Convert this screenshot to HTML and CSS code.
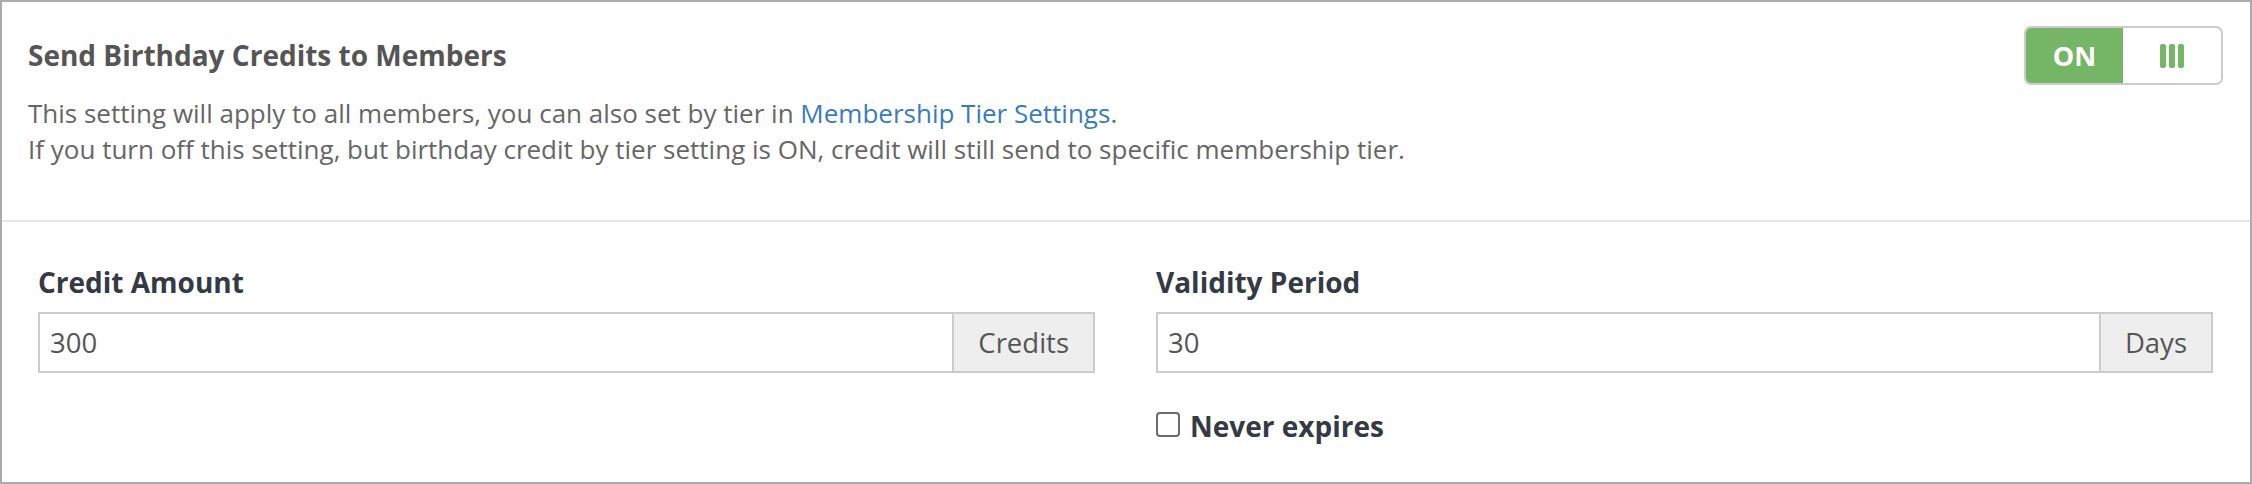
FILE: index.html
```html
<!DOCTYPE html>
<html lang="en">
<head>
<meta charset="utf-8">
<title>Birthday Credits</title>
<link rel="stylesheet" href="styles.css">
</head>
<body>
<div class="panel">
  <div class="panel-head">
    <div class="head-text">
      <h3 class="title">Send Birthday Credits to Members</h3>
      <p class="desc">This setting will apply to all members, you can also set by tier in <a class="link" href="#">Membership Tier Settings</a>.<br>If you turn off this setting, but birthday credit by tier setting is ON, credit will still send to specific membership tier.</p>
    </div>
    <div class="toggle">
      <span class="toggle-on">ON</span>
      <span class="toggle-handle"><i></i><i></i><i></i></span>
    </div>
  </div>
  <div class="panel-body">
    <div class="field">
      <label class="label">Credit Amount</label>
      <div class="input-group">
        <div class="input">300</div>
        <div class="addon">Credits</div>
      </div>
    </div>
    <div class="field">
      <label class="label">Validity Period</label>
      <div class="input-group">
        <div class="input">30</div>
        <div class="addon">Days</div>
      </div>
      <div class="check-row">
        <span class="checkbox"></span>
        <span class="check-label">Never expires</span>
      </div>
    </div>
  </div>
</div>
</body>
</html>
```
FILE: styles.css
```css
* { box-sizing: border-box; }
html, body { margin: 0; padding: 0; background: #fff; }
body { font-family: "Open Sans", "Noto Sans", sans-serif; }

.panel {
  width: 2252px;
  height: 484px;
  border: 2px solid #ababab;
  background: #fff;
}

.panel-head {
  display: flex;
  justify-content: space-between;
  align-items: flex-start;
  padding: 24px 27px 0 26px;
  height: 220px;
  border-bottom: 2px solid #e6e6e6;
}

.title {
  margin: 11px 0 0;
  font-size: 28px;
  line-height: 36px;
  font-weight: 700;
  color: #555;
}

.desc {
  margin: 22px 0 0;
  font-size: 26px;
  line-height: 36px;
  color: #666;
}

.link { color: #3a7bbf; text-decoration: none; }

.toggle {
  display: flex;
  width: 199px;
  height: 59px;
  border: 2px solid #cccccc;
  border-radius: 7px;
  overflow: hidden;
  flex: none;
}
.toggle-on {
  width: 97px;
  background: #74b566;
  color: #fff;
  font-weight: 700;
  font-size: 27px;
  display: flex;
  align-items: center;
  justify-content: center;
}
.toggle-handle {
  flex: 1;
  display: flex;
  align-items: center;
  justify-content: center;
  gap: 3px;
}
.toggle-handle i {
  display: block;
  width: 6px;
  height: 24px;
  background: #74b566;
  border-radius: 2px;
}

.panel-body {
  display: grid;
  grid-template-columns: 1fr 1fr;
  column-gap: 61px;
  padding: 42px 37px 0 36px;
}

.label {
  display: block;
  font-size: 28px;
  line-height: 36px;
  font-weight: 700;
  color: #343a44;
}

.input-group {
  display: flex;
  margin-top: 12px;
  height: 61px;
}
.input {
  flex: 1;
  border: 2px solid #cccccc;
  padding: 0 10px;
  font-size: 27.5px;
  color: #555;
  display: flex;
  align-items: center;
}
.addon {
  flex: none;
  border: 2px solid #cccccc;
  border-left: none;
  background: #eeeeee;
  padding: 0 24px;
  font-size: 27.5px;
  color: #555;
  display: flex;
  align-items: center;
}

.check-row {
  display: flex;
  align-items: center;
  gap: 10px;
  margin-top: 35px;
  height: 36px;
}
.checkbox {
  width: 24px;
  height: 25px;
  border: 2px solid #6b6b6b;
  border-radius: 4px;
  margin-top: -3px;
  flex: none;
}
.check-label {
  font-size: 28px;
  line-height: 36px;
  font-weight: 700;
  color: #343a44;
}
```
